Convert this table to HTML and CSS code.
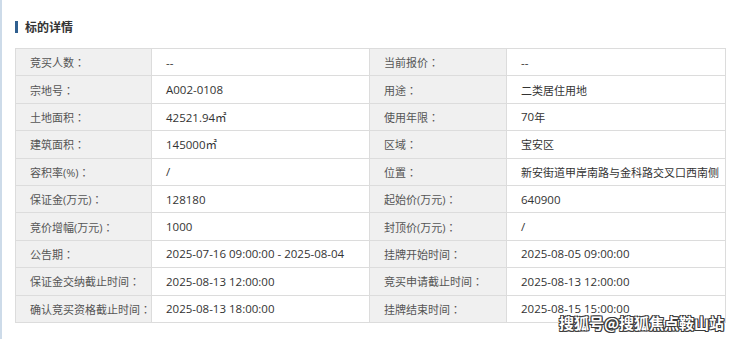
FILE: index.html
```html
<!DOCTYPE html>
<html lang="zh-CN">
<head>
<meta charset="utf-8">
<title>标的详情</title>
<link rel="stylesheet" href="styles.css">
</head>
<body>
<div class="page">
  <h2 class="title"><span class="bar"></span>标的详情</h2>
  <div class="grid">
    <div class="lbl">竞买人数<span class="colon">：</span></div><div class="val num">--</div><div class="lbl">当前报价<span class="colon">：</span></div><div class="val num">--</div>
    <div class="lbl">宗地号<span class="colon">：</span></div><div class="val num">A002-0108</div><div class="lbl">用途<span class="colon">：</span></div><div class="val">二类居住用地</div>
    <div class="lbl">土地面积<span class="colon">：</span></div><div class="val num">42521.94㎡</div><div class="lbl">使用年限<span class="colon">：</span></div><div class="val"><span class="num">70</span>年</div>
    <div class="lbl">建筑面积<span class="colon">：</span></div><div class="val num">145000㎡</div><div class="lbl">区域<span class="colon">：</span></div><div class="val">宝安区</div>
    <div class="lbl">容积率(%)<span class="colon">：</span></div><div class="val num">/</div><div class="lbl">位置<span class="colon">：</span></div><div class="val">新安街道甲岸南路与金科路交叉口西南侧</div>
    <div class="lbl">保证金(万元)<span class="colon">：</span></div><div class="val num">128180</div><div class="lbl">起始价(万元)<span class="colon">：</span></div><div class="val num">640900</div>
    <div class="lbl">竞价增幅(万元)<span class="colon">：</span></div><div class="val num">1000</div><div class="lbl">封顶价(万元)<span class="colon">：</span></div><div class="val num">/</div>
    <div class="lbl">公告期<span class="colon">：</span></div><div class="val num">2025-07-16 09:00:00 - 2025-08-04</div><div class="lbl">挂牌开始时间<span class="colon">：</span></div><div class="val num">2025-08-05 09:00:00</div>
    <div class="lbl">保证金交纳截止时间<span class="colon">：</span></div><div class="val num">2025-08-13 12:00:00</div><div class="lbl">竞买申请截止时间<span class="colon">：</span></div><div class="val num">2025-08-13 12:00:00</div>
    <div class="lbl">确认竞买资格截止时间<span class="colon">：</span></div><div class="val num">2025-08-13 18:00:00</div><div class="lbl">挂牌结束时间<span class="colon">：</span></div><div class="val num">2025-08-15 15:00:00</div>
  </div>
  <div class="watermark">搜狐号@搜狐焦点鞍山站</div>
</div>
</body>
</html>
```
FILE: styles.css
```css
html, body {
  margin: 0;
  padding: 0;
  background: #ffffff;
}
body {
  width: 740px;
  height: 339px;
  overflow: hidden;
  font-family: "Open Sans", "Noto Sans CJK SC", sans-serif;
}
.page {
  position: relative;
  height: 339px;
  box-sizing: border-box;
  border-left: 2px solid #cddbe9;
  padding: 20px 0 0 13px;
}
.title {
  display: flex;
  align-items: center;
  margin: 0 0 15px 0;
  height: 13px;
  font-family: "Noto Sans CJK SC", sans-serif;
  font-size: 12px;
  font-weight: bold;
  color: #333333;
  line-height: 13px;
}
.bar {
  width: 3px;
  height: 12px;
  background: #2f5f8f;
  margin-right: 7px;
}
.grid {
  display: grid;
  grid-template-columns: 136px 218px 137px 219px;
  grid-auto-rows: 27.4px;
  width: 710px;
  border-top: 1px solid #dcdcdc;
  border-left: 1px solid #dcdcdc;
  font-size: 11px;
}
.grid > div {
  box-sizing: border-box;
  border-right: 1px solid #dcdcdc;
  border-bottom: 1px solid #dcdcdc;
  padding-left: 14px;
  display: flex;
  align-items: center;
  white-space: nowrap;
}
.lbl {
  background: #f0f0f0;
  color: #555555;
}
.colon {
  font-family: "Noto Sans CJK JP", sans-serif;
}
.val {
  background: #ffffff;
  color: #333333;
}
.num {
  font-size: 11.5px;
}
.watermark {
  position: absolute;
  right: 16px;
  top: 312px;
  font-family: "Noto Sans CJK SC", sans-serif;
  font-size: 15px;
  font-weight: bold;
  color: #ffffff;
  text-shadow: 1px 1px 0 #3a3a3a, -1px -1px 0 #3a3a3a, 1px -1px 0 #3a3a3a, -1px 1px 0 #3a3a3a, 0 1px 0 #3a3a3a, 1px 0 0 #3a3a3a;
}
```
